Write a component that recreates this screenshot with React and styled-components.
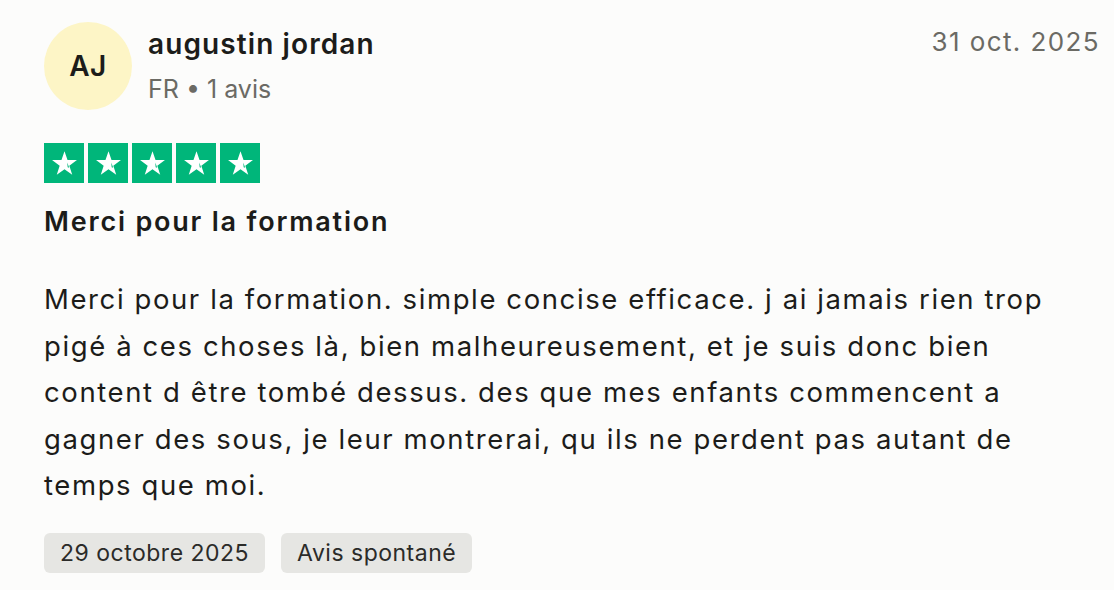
import React from 'react';
import styled, { createGlobalStyle } from 'styled-components';

const GlobalStyle = createGlobalStyle`
  html, body {
    margin: 0;
    padding: 0;
    background: #fcfcfb;
  }
  body {
    font-family: Inter, "Noto Sans", "Liberation Sans", sans-serif;
    color: #1c1c1a;
  }
`;

const Card = styled.article`
  width: 1114px;
  height: 590px;
  box-sizing: border-box;
  padding: 22px 14px 0 44px;
  background: #fcfcfb;
`;

const Header = styled.header`
  display: flex;
  align-items: flex-start;
`;

const Avatar = styled.div`
  flex: none;
  width: 88px;
  height: 88px;
  border-radius: 50%;
  background: #fdf5c6;
  display: flex;
  align-items: center;
  justify-content: center;
  font-size: 28px;
  font-weight: 600;
  letter-spacing: 0.5px;
  color: #1c1c1a;
`;

const Who = styled.div`
  flex: 1;
  margin-left: 16px;
  display: flex;
  flex-direction: column;
  gap: 14px;
  padding-top: 6px;
`;

const Name = styled.div`
  font-size: 28px;
  font-weight: 600;
  line-height: 32px;
  letter-spacing: 1.1px;
`;

const Meta = styled.div`
  font-size: 25px;
  line-height: 30px;
  color: #6b6a64;
`;

const Dated = styled.time`
  font-size: 26px;
  line-height: 32px;
  color: #6b6a64;
  padding-top: 4px;
  letter-spacing: 1.4px;
`;

const Stars = styled.div`
  display: flex;
  gap: 4px;
  margin-top: 33px;
`;

const StarBox = styled.div`
  width: 40px;
  height: 40px;
  background: #00b67a;
  display: flex;
  align-items: center;
  justify-content: center;
`;

const Title = styled.h2`
  margin: 23px 0 0;
  font-size: 27px;
  font-weight: 600;
  line-height: 32px;
  letter-spacing: 1.8px;
`;

const Body = styled.p`
  margin: 38px 0 0;
  font-size: 27.5px;
  line-height: 46.5px;
  letter-spacing: 1.6px;
  white-space: nowrap;
`;

const Tags = styled.div`
  display: flex;
  gap: 16px;
  margin-top: 24px;
`;

const Tag = styled.span`
  height: 40px;
  padding: 0 16px;
  border-radius: 6px;
  background: #e6e6e3;
  display: flex;
  align-items: center;
  font-size: 23px;
  letter-spacing: 0.5px;
  color: #2b2b29;
`;

const Star = () => (
  <svg width="29" height="29" viewBox="0 0 24 24" aria-hidden="true">
    <path
      fill="#fff"
      d="M12 1.8l2.5 7.4h7.8l-6.3 4.6 2.4 7.5L12 16.7l-6.4 4.6 2.4-7.5-6.3-4.6h7.8z"
    />
    <path fill="#00b67a" d="M14.6 15.2l1.3 0.3-1.6-4.4z" />
  </svg>
);

// les retours a la ligne suivent la capture
const lines = [
  'Merci pour la formation. simple concise efficace. j ai jamais rien trop',
  'pigé à ces choses là, bien malheureusement, et je suis donc bien',
  'content d être tombé dessus. des que mes enfants commencent a',
  'gagner des sous, je leur montrerai, qu ils ne perdent pas autant de',
  'temps que moi.',
];

export default function App() {
  return (
    <>
      <GlobalStyle />
      <Card>
        <Header>
          <Avatar>AJ</Avatar>
          <Who>
            <Name>augustin jordan</Name>
            <Meta>FR • 1 avis</Meta>
          </Who>
          <Dated>31 oct. 2025</Dated>
        </Header>
        <Stars>
          {[0, 1, 2, 3, 4].map((i) => (
            <StarBox key={i}>
              <Star />
            </StarBox>
          ))}
        </Stars>
        <Title>Merci pour la formation</Title>
        <Body>
          {lines.map((l, i) => (
            <React.Fragment key={i}>
              {l}
              {i < lines.length - 1 ? <br /> : null}
            </React.Fragment>
          ))}
        </Body>
        <Tags>
          <Tag>29 octobre 2025</Tag>
          <Tag>Avis spontané</Tag>
        </Tags>
      </Card>
    </>
  );
}
